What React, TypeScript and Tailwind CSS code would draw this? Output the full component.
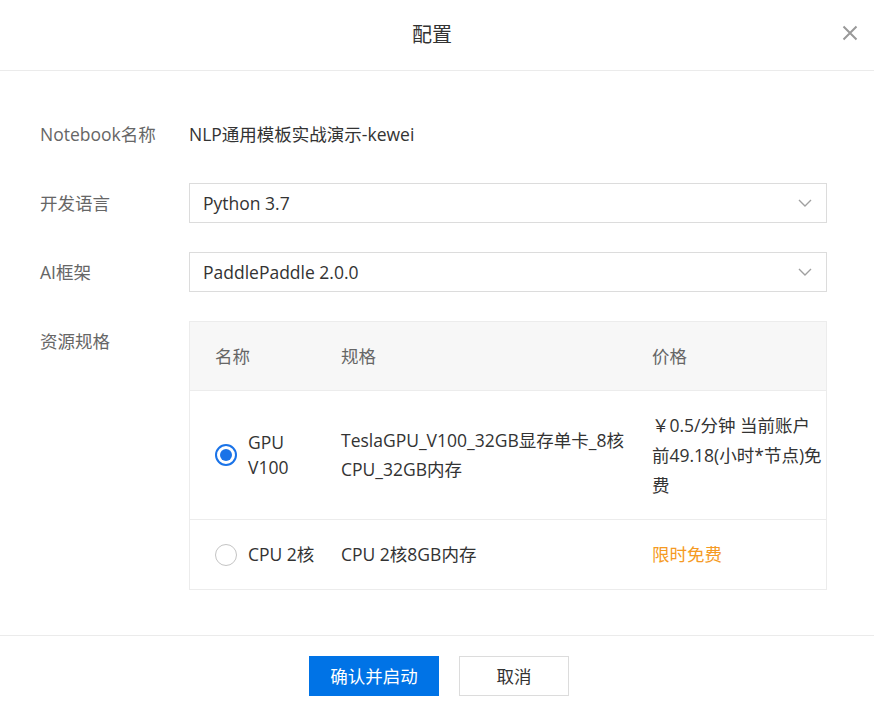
import React from "react";

const font = { fontFamily: '"Open Sans", "Noto Sans CJK SC", sans-serif' };

function Chevron() {
  return (
    <svg width="14" height="8" viewBox="0 0 14 8" fill="none">
      <path d="M1 1L7 7L13 1" stroke="#a0a0a0" strokeWidth="1.4" />
    </svg>
  );
}

function Select({ value }: { value: string }) {
  return (
    <div className="flex h-[40px] w-[638px] items-center justify-between border border-[#dcdcdc] bg-white pl-[13px] pr-[14px] text-[17.5px] text-[#333]">
      <span>{value}</span>
      <Chevron />
    </div>
  );
}

export default function App() {
  return (
    <div
      className="flex h-[711px] w-[874px] flex-col bg-white text-[17.5px] text-[#333]"
      style={font}
    >
      {/* header */}
      <div className="relative flex h-[71px] shrink-0 items-center justify-center border-b border-[#ebebeb] pr-[10px]">
        <span className="text-[20px] text-[#333]">配置</span>
        <button className="absolute right-[16px] top-[25px] flex h-[16px] w-[16px] items-center justify-center">
          <svg width="16" height="16" viewBox="0 0 16 16">
            <path d="M1.5 1.5L14.5 14.5M14.5 1.5L1.5 14.5" stroke="#999" strokeWidth="2" />
          </svg>
        </button>
      </div>

      {/* body */}
      <div className="flex flex-1 flex-col gap-[29px] pl-[40px] pt-[43px]">
        <div className="flex h-[40px] items-center">
          <div className="w-[149px] text-[#666]">Notebook名称</div>
          <div className="text-[#333]">NLP通用模板实战演示-kewei</div>
        </div>
        <div className="flex h-[40px] items-center">
          <div className="w-[149px] text-[#666]">开发语言</div>
          <Select value="Python 3.7" />
        </div>
        <div className="flex h-[40px] items-center">
          <div className="w-[149px] text-[#666]">AI框架</div>
          <Select value="PaddlePaddle 2.0.0" />
        </div>
        <div className="flex items-start">
          <div className="flex h-[40px] w-[149px] items-center text-[#666]">资源规格</div>
          <div className="w-[638px] border border-[#ececec]">
            <div className="flex h-[69px] items-center border-b border-[#ececec] bg-[#f7f7f7] text-[#666]">
              <div className="w-[131px] pl-[25px]">名称</div>
              <div className="w-[306px] pl-[20px]">规格</div>
              <div className="flex-1 pl-[25px]">价格</div>
            </div>
            <div className="flex h-[129px] items-center border-b border-[#ececec]">
              <div className="flex w-[131px] items-center pl-[25px]">
                <span className="flex h-[22px] w-[22px] shrink-0 items-center justify-center rounded-full border-2 border-[#1a73e8]">
                  <span className="h-[12px] w-[12px] rounded-full bg-[#1a73e8]" />
                </span>
                <span className="ml-[11px] leading-[25px]">
                  GPU
                  <br />
                  V100
                </span>
              </div>
              <div className="w-[306px] pl-[20px] leading-[29px]">
                <div className="whitespace-nowrap">TeslaGPU_V100_32GB显存单卡_8核</div>
                <div className="whitespace-nowrap">CPU_32GB内存</div>
              </div>
              <div className="flex-1 pl-[25px] leading-[30px]">
                <div className="whitespace-nowrap">￥0.5/分钟 当前账户</div>
                <div className="whitespace-nowrap">前49.18(小时*节点)免</div>
                <div>费</div>
              </div>
            </div>
            <div className="flex h-[69px] items-center">
              <div className="flex w-[131px] items-center pl-[25px]">
                <span className="h-[22px] w-[22px] shrink-0 rounded-full border border-[#c4c4c4]" />
                <span className="ml-[11px] whitespace-nowrap">CPU 2核</span>
              </div>
              <div className="w-[306px] pl-[20px]">CPU 2核8GB内存</div>
              <div className="flex-1 pl-[25px] text-[#f59a23]">限时免费</div>
            </div>
          </div>
        </div>
      </div>

      {/* footer */}
      <div className="flex h-[76px] shrink-0 items-start justify-center gap-[20px] border-t border-[#ebebeb] pl-[4px] pt-[20px]">
        <button className="h-[40px] w-[130px] bg-[#0073e6] text-[17.5px] text-white">确认并启动</button>
        <button className="h-[40px] w-[110px] border border-[#dcdcdc] bg-white text-[17.5px] text-[#333]">取消</button>
      </div>
    </div>
  );
}
